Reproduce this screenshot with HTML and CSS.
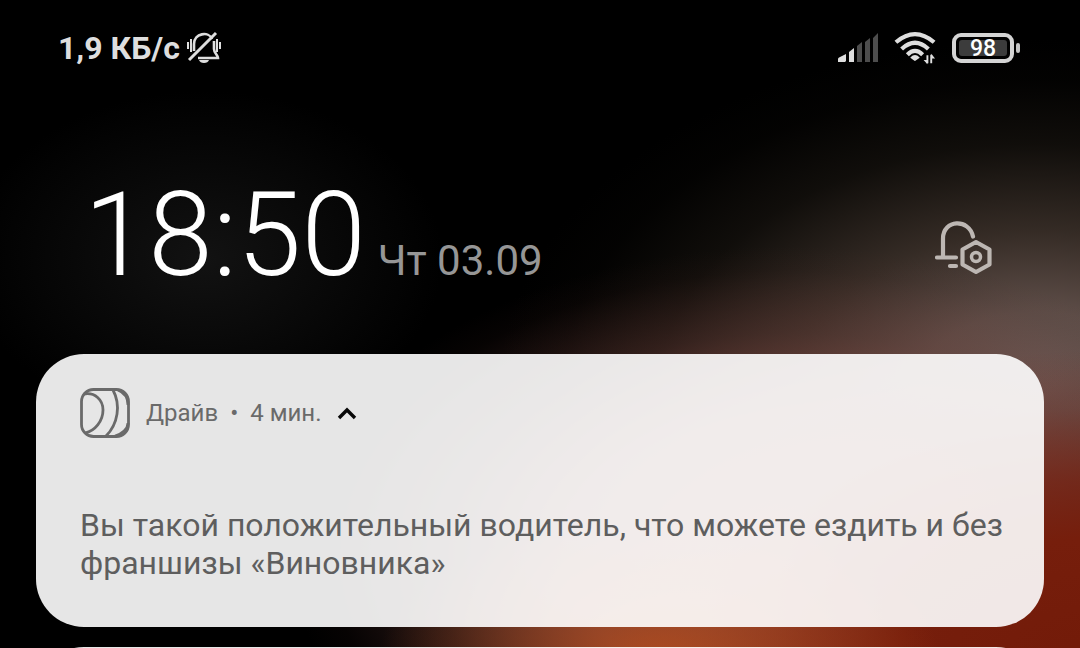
FILE: index.html
```html
<!DOCTYPE html>
<html lang="ru">
<head>
<meta charset="utf-8">
<meta name="viewport" content="width=device-width, initial-scale=1">
<title>Уведомления</title>
<link rel="stylesheet" href="styles.css">
</head>
<body>
<div class="shade">
  <header class="status">
    <div class="status-group">
      <span class="speed">1,9 КБ/с</span>
      <svg class="mute" viewBox="0 0 36 36" aria-hidden="true" fill="none" stroke="currentColor" stroke-width="2.6">
        <path d="M8 21V14C8 3 23 1 26 9M28 11V19C28 23 32 25 32 28H12"/>
        <path d="M30 3L3 30" stroke-width="3"/>
        <path d="M2 12V19M5 9V22M31 9V22M34 12V19" stroke-width="2"/>
        <path d="M13 30H23Q22 33 18 33T13 30Z" fill="currentColor" stroke="none"/>
      </svg>
    </div>
    <div class="status-group status-right">
      <svg class="signal" viewBox="0 0 42 30" aria-hidden="true" fill="currentColor">
        <path d="M2 29V26Q2 25 3 24.500L10 21V28L9 29ZM13 29V19L18 15V29Z"/>
        <path d="M21 29V13L26 9V29ZM29 29V9L34 5V29ZM37 29V5L42 0V29Z" opacity=".35"/>
      </svg>
      <svg class="wifi" viewBox="0 0 44 34" aria-hidden="true" fill="none" stroke="currentColor" stroke-width="4.400">
        <path d="M2 11Q22-6 42 11M8 18Q22 5 36 18M14 24Q22 16 30 24"/>
        <path d="M22 29.500L18.500 27A4.500 4.500 0 0 1 25.500 27Z" fill="currentColor" stroke-width="2"/>
        <path d="M35 24.500V33M39 24V33" stroke-width="2"/>
        <path d="M31 29.500H35V34ZM39 23V28H43Z" fill="currentColor" stroke="none"/>
      </svg>
      <div class="battery"><span class="battery-level">98</span></div>
    </div>
  </header>
  <section class="clock">
    <time class="time">18:50</time>
    <span class="date">Чт 03.09</span>
    <button class="manage" aria-label="Настройки уведомлений">
      <svg viewBox="0 0 58 54" aria-hidden="true" fill="none" stroke="currentColor" stroke-width="4.200">
        <path d="M8 36V17.500C8 -1.500 34 -3 38 15.500M2 36.500H21M15 45H21" stroke-linecap="round"/>
        <path d="M41 21L54.500 28.500V43.500L41 51L27.500 43.500V28.500Z" stroke-linejoin="round"/>
        <circle cx="41" cy="36" r="4.500" stroke-width="3.500"/>
      </svg>
    </button>
  </section>
  <main class="list">
    <article class="card">
      <div class="card-head">
        <svg class="app" viewBox="0 0 50 50" aria-hidden="true" fill="none" stroke="currentColor" stroke-width="2.800">
          <rect x="1.500" y="1.500" width="47" height="47" rx="12"/>
          <path d="M4 6C15 4 23 12 23 22C23 33 15 43 5 45M33 2C41 17 38 36 26 48M38 2C43 4 48 9 48 17M35 48C42 46 48 41 48 35"/>
        </svg>
        <span class="app-name">Драйв</span>
        <span class="dot">•</span>
        <span class="age">4 мин.</span>
        <button class="collapse" aria-label="Свернуть">
          <svg viewBox="0 0 20 14" aria-hidden="true" fill="none" stroke="currentColor" stroke-width="3.400"><path d="M2 12L10 4L18 12"/></svg>
        </button>
      </div>
      <p class="message">Вы такой положительный водитель, что можете ездить и без франшизы «Виновника»</p>
    </article>
    <article class="card"></article>
  </main>
</div>
</body>
</html>
```
FILE: styles.css
```css
* {
  box-sizing: border-box;
}

body {
  margin: 0;
  background: #000;
  font-family: Roboto, "Noto Sans", sans-serif;
}

button {
  border: 0;
  padding: 0;
  background: none;
  color: inherit;
}

svg {
  display: block;
}

.shade {
  height: 100vh;
  overflow: hidden;
  background:
    radial-gradient(ellipse 26% 22% at 61% 102%, rgba(185, 78, 28, .85), rgba(185, 78, 28, .5) 40%, rgba(185, 78, 28, 0)),
    radial-gradient(ellipse 46% 50% at 102% 104%, #721a08 0%, #761e0c 42%, rgba(118, 32, 16, .75) 60%, rgba(112, 40, 28, .25) 82%, rgba(110, 50, 40, 0)),
    radial-gradient(ellipse 46% 48% at 73% 86%, rgba(150, 82, 68, .95), rgba(130, 72, 65, .8) 45%, rgba(108, 62, 56, .38) 72%, rgba(80, 40, 35, .08) 92%, rgba(80, 40, 35, 0)),
    radial-gradient(ellipse 50% 54% at 96% 60%, #6e5e5a 0%, rgba(104, 86, 80, .9) 22%, rgba(88, 72, 62, .6) 45%, rgba(64, 54, 42, .25) 70%, rgba(50, 42, 30, .06) 88%, rgba(50, 45, 30, 0)),
    radial-gradient(ellipse 22% 26% at 19% 40%, #121212, rgba(16, 16, 16, .5) 55%, rgba(16, 16, 16, 0)),
    #000;
}

.status {
  display: flex;
  justify-content: space-between;
  align-items: center;
  padding: 28px 60px 0 58px;
  color: #dedede;
}

.status-group {
  display: flex;
  align-items: center;
  gap: 6px;
}

.status-right {
  gap: 16px;
}

.speed {
  font-size: 32px;
  line-height: 40px;
  font-weight: 700;
}

.mute {
  width: 36px;
  height: 36px;
}

.signal {
  width: 42px;
  height: 30px;
}

.wifi {
  width: 42px;
  height: 34px;
}

.battery {
  position: relative;
  width: 62px;
  height: 30px;
  padding: 3px;
  margin-right: 6px;
  border: 4px solid #d4d4d4;
  border-radius: 9px;
}

.battery::after {
  content: "";
  position: absolute;
  right: -10px;
  top: 6px;
  width: 4px;
  height: 10px;
  border-radius: 2px;
  background: #c4c4c4;
}

.battery-level {
  display: flex;
  align-items: center;
  justify-content: center;
  height: 100%;
  border-radius: 3px;
  background: #3c3c3c;
  color: #fff;
  font-size: 23px;
  font-weight: 500;
}

.clock {
  display: flex;
  align-items: baseline;
  padding: 93px 87px 0 84px;
}

.time {
  color: #fff;
  font-size: 116px;
  line-height: 148px;
  font-weight: 300;
}

.date {
  margin-left: 12px;
  color: #969696;
  font-size: 42px;
}

.manage {
  width: 58px;
  margin-left: auto;
  color: #bdb7b3;
}

.list {
  display: grid;
  gap: 20px;
  padding: 45px 36px 0;
}

.card {
  min-height: 273px;
  padding: 34px 36px 34px 44px;
  border-radius: 48px;
  background: rgba(255, 255, 255, .9);
  color: #5e5e5e;
}

.card-head {
  display: flex;
  align-items: center;
  font-size: 24px;
  color: #6a6a6a;
}

.app {
  width: 50px;
  height: 50px;
  margin-right: 16px;
}

.dot {
  margin: 0 12px;
}

.collapse {
  width: 20px;
  margin-left: 15px;
  color: #080808;
}

.message {
  margin: 68px 0 0;
  font-size: 32px;
  line-height: 38px;
}
```
